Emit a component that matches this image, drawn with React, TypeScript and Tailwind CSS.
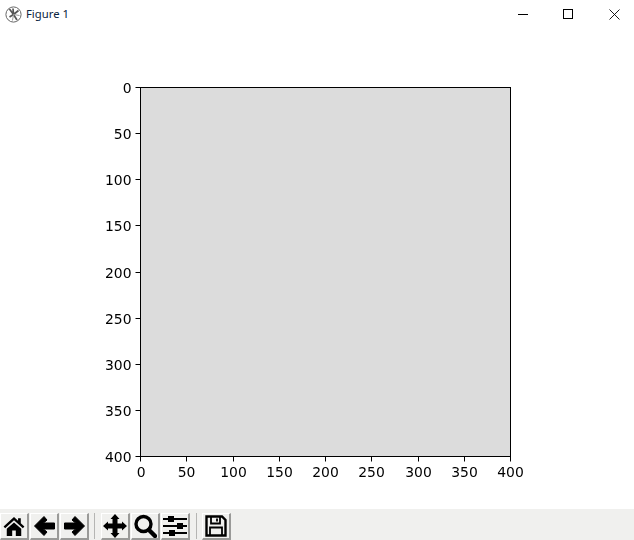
import React from "react";

const xt = [0, 50, 100, 150, 200, 250, 300, 350, 400];

function Btn({ children }: { children: React.ReactNode }) {
  return (
    <div className="w-[29px] h-[27px] mt-[4px] flex items-center justify-center border-t border-l border-white border-r-2 border-b-2 border-r-[#9a9a98] border-b-[#9a9a98] bg-[#f0f0ee]">
      {children}
    </div>
  );
}

function Chart() {
  const left = 140.5, right = 510.5, top = 57.5, bottom = 426.5;
  return (
    <svg width="634" height="479" className="block will-change-transform" style={{ fontFamily: "'DejaVu Sans', sans-serif" }}>
      <rect x={left} y={top} width={right - left} height={bottom - top} fill="#dcdcdc" stroke="#000" strokeWidth="1" />
      {xt.map((v, i) => {
        const x = Math.round(left + (i * (right - left)) / 8 - 0.5) + 0.5;
        const y = Math.round(top + (i * (bottom - top)) / 8 - 0.5) + 0.5;
        return (
          <g key={v}>
            <line x1={x} x2={x} y1={bottom} y2={bottom + 5} stroke="#000" />
            <line x1={left - 5} x2={left} y1={y} y2={y} stroke="#000" />
            <text x={i === 0 ? x + 0.6 : x} y={bottom + 20} textAnchor="middle" fontSize="13.9" fill="#000">{v}</text>
            <text x={left - 9} y={y + 5} textAnchor="end" fontSize="13.9" fill="#000">{v}</text>
          </g>
        );
      })}
    </svg>
  );
}

export default function App() {
  return (
    <div className="w-[634px] h-[540px] bg-white flex flex-col overflow-hidden">
      <div className="h-[30px] flex items-center justify-between shrink-0">
        <div className="flex items-center pl-[5px] gap-[4px] -mt-[2px]">
          <svg width="17" height="17" viewBox="0 0 17 17" fill="none">
            <circle cx="8.5" cy="8.5" r="7.6" stroke="#666" strokeWidth="1" fill="#fff" />
            <path d="M8.5 8.5 L4.5 3 M8.5 8.5 L8 2.5 M8.5 8.5 L13.5 4.5 M8.5 8.5 L12 14 M8.5 8.5 L4.5 11" stroke="#555" strokeWidth="1.7" />
            <path d="M8.5 8.5 L14.5 9.5 M8.5 8.5 L7.5 14.5" stroke="#999" strokeWidth="1" />
          </svg>
          <span className="text-[11.3px] text-[#0a2540]" style={{ fontFamily: "'Noto Sans', sans-serif" }}>Figure 1</span>
        </div>
        <div className="flex items-center gap-[35px] pr-[14px] -mt-[2px]">
          <svg width="10" height="10"><path d="M0 5.5H10" stroke="#000" /></svg>
          <svg width="10" height="10"><rect x=".5" y=".5" width="9" height="9" fill="none" stroke="#000" /></svg>
          <svg width="11" height="11" className="ml-px"><path d="M.5.5L10.5 10.5M10.5.5L.5 10.5" stroke="#000" strokeWidth="0.9" /></svg>
        </div>
      </div>
      <Chart />
      <div className="h-[31px] bg-[#f0f0ee] flex shrink-0 gap-px">
        <Btn><svg width="22" height="19" viewBox="0 0 24 21"><path d="M12 0 L0.5 10.5 L2.2 12.3 L12 3.6 L21.8 12.3 L23.5 10.5 L19.5 7 V1.5 H16.5 V4.2 Z M12 6 L4 13 V21 H10 V15 H14 V21 H20 V13 Z" fill="#000" /></svg></Btn>
        <Btn><svg width="23" height="22" viewBox="0 0 23 22"><path d="M11 1.5 L1.5 11 L11 20.5 L14 17 L10.5 14 H21.5 V8 H10.5 L14 5 Z" fill="#000" stroke="#000" strokeLinejoin="round" /></svg></Btn>
        <Btn><svg width="23" height="22" viewBox="0 0 23 22"><path d="M12 1.5 L21.5 11 L12 20.5 L9 17 L12.5 14 H1.5 V8 H12.5 L9 5 Z" fill="#000" stroke="#000" strokeLinejoin="round" /></svg></Btn>
        <div className="w-px h-[26px] mt-[4px] ml-[4px] mr-[5px] bg-[#b5b5b3]" />
        <Btn><svg width="24" height="24" viewBox="0 0 24 24"><path d="M12 0 L16.5 5 H14.5 V9.5 H19 V7.5 L24 12 L19 16.5 V14.5 H14.5 V19 H16.5 L12 24 L7.5 19 H9.5 V14.5 H5 V16.5 L0 12 L5 7.5 V9.5 H9.5 V5 H7.5 Z" fill="#000" /></svg></Btn>
        <Btn><svg width="24" height="24" viewBox="0 0 24 24" fill="none"><circle cx="10.5" cy="10" r="7.5" stroke="#000" strokeWidth="3.4" /><path d="M16 16 L22 22" stroke="#000" strokeWidth="4.4" strokeLinecap="round" /></svg></Btn>
        <Btn><svg width="24" height="22" viewBox="0 0 24 22"><path d="M0 4H24M0 11H24M0 18H24" stroke="#000" strokeWidth="2" /><path d="M5 1H11V7H5ZM14 8H20V14H14ZM6 15H12V21H6Z" fill="#000" /></svg></Btn>
        <div className="w-px h-[26px] mt-[4px] ml-[5px] mr-[4px] bg-[#b5b5b3]" />
        <Btn><svg width="22" height="22" viewBox="0 0 22 22" fill="none"><path d="M1.5 1.5H17L20.5 5V20.5H1.5Z" stroke="#000" strokeWidth="2.4" /><path d="M6 2V8.5H15V2M12 3.5V6.5" stroke="#000" strokeWidth="1.8" /><path d="M5 20V12.5H17V20" stroke="#000" strokeWidth="1.8" /></svg></Btn>
      </div>
    </div>
  );
}
